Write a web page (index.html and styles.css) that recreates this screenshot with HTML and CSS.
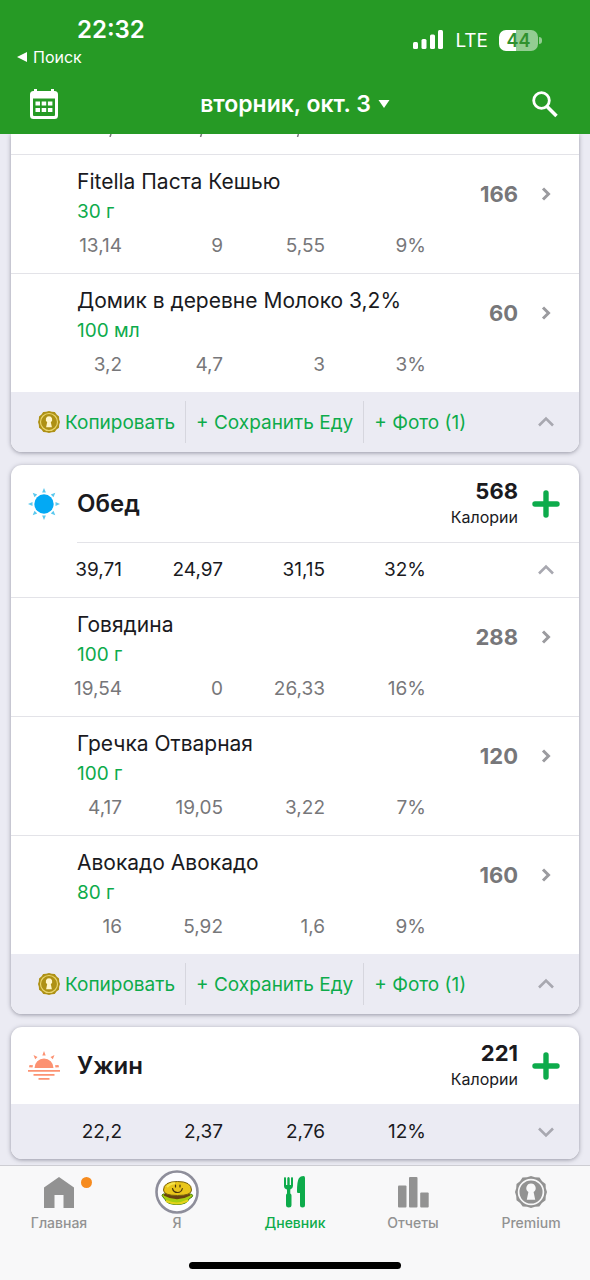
FILE: index.html
```html
<!DOCTYPE html>
<html lang="ru">
<head>
<meta charset="utf-8">
<meta name="viewport" content="width=device-width, initial-scale=1">
<title>Дневник</title>
<link rel="stylesheet" href="styles.css">
</head>
<body>
<svg class="sprite" aria-hidden="true">
  <symbol id="right" viewBox="0 0 10 14"><path d="M2 1.500 7.500 7 2 12.500" fill="none" stroke="currentColor" stroke-width="3"/></symbol>
  <symbol id="up" viewBox="0 0 18 12"><path d="m2 9.500 7-7 7 7" fill="none" stroke="currentColor" stroke-width="2.600"/></symbol>
  <symbol id="down" viewBox="0 0 18 12"><path d="m2 2.500 7 7 7-7" fill="none" stroke="currentColor" stroke-width="2.600"/></symbol>
  <symbol id="plus" viewBox="0 0 28 28"><path d="M14 3v22M3 14h22" fill="none" stroke="currentColor" stroke-width="5.400" stroke-linecap="round"/></symbol>
  <symbol id="coin" viewBox="0 0 32 32">
    <path fill="currentColor" d="M16 0l4 1.200 4.500.300 2.600 3.700L30.600 8l.2 4.300L32 16l-1.200 4-.3 4.300-3.600 2.600-2.600 3.600-4.300.3L16 32l-4-1.200-4.300-.3-2.600-3.600L1.500 24.300 1.200 20 0 16l1.200-3.700L1.500 8l3.500-2.800L7.500 1.500 12 1.200z"/>
    <circle cx="16" cy="16" r="12.400" fill="none" stroke="var(--ring)" stroke-width="1.700"/>
    <path fill="var(--hole)" d="M16 7.500a4.700 4.700 0 0 1 2.600 8.600l1.600 7.700h-8.400l1.600-7.700A4.700 4.700 0 0 1 16 7.500z"/>
  </symbol>
</svg>
<div class="app">
  <header class="top">
    <div class="status">
      <div class="status-left">
        <time class="clock">22:32</time>
        <a class="back" href="#"><svg width="10" height="10" viewBox="0 0 10 10"><path d="M0 5 10 0v10z" fill="currentColor"/></svg>Поиск</a>
      </div>
      <div class="status-right">
        <svg width="31" height="20" viewBox="0 0 31 20" fill="currentColor"><rect x="0" y="12" width="5" height="7" rx="1.500"/><rect x="8.500" y="9" width="5" height="10" rx="1.500"/><rect x="17" y="4.500" width="5" height="14.500" rx="1.500"/><rect x="25" y="0" width="5" height="19" rx="1.500"/></svg>
        <span class="network">LTE</span>
        <span class="battery">44</span>
      </div>
    </div>
    <div class="bar">
      <button class="icon-button" aria-label="Календарь"><svg width="28" height="31" viewBox="0 0 28 31"><path fill="currentColor" fill-rule="evenodd" d="M3.500 2H4V0h3v2h14V0h3v2h.5A3.500 3.500 0 0 1 28 5.500v21a3.500 3.500 0 0 1-3.500 3.500h-21A3.500 3.500 0 0 1 0 26.500v-21A3.500 3.500 0 0 1 3.500 2zM3 9.500V26q0 1 1 1h20q1 0 1-1V9.500z"/><path fill="currentColor" d="M5.500 12.500h4.500v4H5.500zm6.200 0h4.500v4h-4.500zm6.200 0h4.500v4h-4.500zM5.500 19h4.500v4H5.500zm6.200 0h4.500v4h-4.500zm6.200 0h4.500v4h-4.500z"/></svg></button>
      <button class="date">вторник, окт. 3<svg width="12" height="8" viewBox="0 0 12 8"><path d="M.5 0h11L6 8z" fill="currentColor"/></svg></button>
      <button class="icon-button" aria-label="Найти"><svg width="26" height="27" viewBox="0 0 26 27" fill="none" stroke="currentColor"><circle cx="9.500" cy="9.500" r="7.800" stroke-width="2.800"/><path d="m15 15.500 9.500 9.500" stroke-width="3.600"/></svg></button>
    </div>
  </header>

  <main class="diary">
    <section class="card card-cut">
      <svg class="ticks" width="190" height="3" viewBox="0 0 190 3" aria-hidden="true"><path d="m2 0-1 3M92.500 0l-1 3M189.500 0l-1 3" stroke="currentColor" stroke-width="1.500"/></svg>
      <ul class="foods">
        <li><a class="food" href="#"><span class="name">Fitella Паста Кешью</span><span class="kcal">166</span><svg class="go" width="10" height="14"><use href="#right"/></svg><span class="portion">30 г</span><span class="nutrients"><span>13,14</span><span>9</span><span>5,55</span><span>9%</span></span></a></li>
        <li><a class="food" href="#"><span class="name">Домик в деревне Молоко 3,2%</span><span class="kcal">60</span><svg class="go" width="10" height="14"><use href="#right"/></svg><span class="portion">100 мл</span><span class="nutrients"><span>3,2</span><span>4,7</span><span>3</span><span>3%</span></span></a></li>
      </ul>
      <footer class="actions">
        <button class="action"><svg class="coin" width="22" height="22"><use href="#coin"/></svg>Копировать</button>
        <button class="action">+ Сохранить Еду</button>
        <button class="action">+ Фото (1)</button>
        <button class="toggle" aria-label="Свернуть"><svg width="18" height="12"><use href="#up"/></svg></button>
      </footer>
    </section>

    <section class="card">
      <header class="meal">
        <svg class="meal-icon" width="32" height="32" viewBox="-16 -16 32 32" fill="#5cc9ee"><circle r="9.700" fill="#03a9f4"/><path id="ray" d="M-1.900-11.500h3.800L0-16z"/><use href="#ray" transform="rotate(45)"/><use href="#ray" transform="rotate(90)"/><use href="#ray" transform="rotate(135)"/><use href="#ray" transform="rotate(180)"/><use href="#ray" transform="rotate(225)"/><use href="#ray" transform="rotate(270)"/><use href="#ray" transform="rotate(315)"/></svg>
        <h2>Обед</h2>
        <p class="total"><strong>568</strong><span>Калории</span></p>
        <button class="add" aria-label="Добавить"><svg width="28" height="28"><use href="#plus"/></svg></button>
      </header>
      <div class="summary summary-open">
        <div class="nutrients"><span>39,71</span><span>24,97</span><span>31,15</span><span>32%</span></div>
        <button class="toggle" aria-label="Свернуть"><svg width="18" height="12"><use href="#up"/></svg></button>
      </div>
      <ul class="foods">
        <li><a class="food" href="#"><span class="name">Говядина</span><span class="kcal">288</span><svg class="go" width="10" height="14"><use href="#right"/></svg><span class="portion">100 г</span><span class="nutrients"><span>19,54</span><span>0</span><span>26,33</span><span>16%</span></span></a></li>
        <li><a class="food" href="#"><span class="name">Гречка Отварная</span><span class="kcal">120</span><svg class="go" width="10" height="14"><use href="#right"/></svg><span class="portion">100 г</span><span class="nutrients"><span>4,17</span><span>19,05</span><span>3,22</span><span>7%</span></span></a></li>
        <li><a class="food" href="#"><span class="name">Авокадо Авокадо</span><span class="kcal">160</span><svg class="go" width="10" height="14"><use href="#right"/></svg><span class="portion">80 г</span><span class="nutrients"><span>16</span><span>5,92</span><span>1,6</span><span>9%</span></span></a></li>
      </ul>
      <footer class="actions">
        <button class="action"><svg class="coin" width="22" height="22"><use href="#coin"/></svg>Копировать</button>
        <button class="action">+ Сохранить Еду</button>
        <button class="action">+ Фото (1)</button>
        <button class="toggle" aria-label="Свернуть"><svg width="18" height="12"><use href="#up"/></svg></button>
      </footer>
    </section>

    <section class="card">
      <header class="meal">
        <svg class="meal-icon" width="32" height="32" viewBox="0 0 32 32" fill="#fc9272"><path d="M6.500 18a9.500 9.500 0 0 1 19 0zM14.300 5.500h3.400L16 1zM5.500 5l4 2-2.300 2.300zM26.500 5l-4 2 2.300 2.300zM1.500 15l3.500.2-.5 2.300-3.500-.3zM30.500 15l-3.500.2.500 2.300 3.500-.3z"/><path d="M0 20.800h32M5.500 24.800h21M10.500 28.800h11" stroke="#fc9272" stroke-width="1.800"/></svg>
        <h2>Ужин</h2>
        <p class="total"><strong>221</strong><span>Калории</span></p>
        <button class="add" aria-label="Добавить"><svg width="28" height="28"><use href="#plus"/></svg></button>
      </header>
      <div class="summary summary-closed">
        <div class="nutrients"><span>22,2</span><span>2,37</span><span>2,76</span><span>12%</span></div>
        <button class="toggle" aria-label="Развернуть"><svg width="18" height="12"><use href="#down"/></svg></button>
      </div>
    </section>
  </main>

  <nav class="tabs">
    <div class="tab-row">
      <a class="tab" href="#"><span class="tab-icon"><svg width="30" height="31" viewBox="0 0 30 31"><path fill="currentColor" d="M15 0 30 10.500V31H19.500V18h-9v13H0V10.500z"/></svg><span class="dot"></span></span>Главная</a>
      <a class="tab" href="#"><span class="tab-icon"><svg width="44" height="44" viewBox="0 0 44 44"><circle cx="22" cy="22" r="20.500" fill="#fdfdff" stroke="#8e8e9b" stroke-width="2.600"/><path d="M8 27q-2-2 0-3h28q3 1 1 3l-3 2q-2 5.500-12 5.500T10 29.500z" fill="#a8ce10" stroke="#4c8210"/><path d="M9.500 24q12.500 7 25 0" fill="none" stroke="#6a4310" stroke-width="3.500"/><path d="M11 31q11 5 22-.5" fill="none" stroke="#e5d41b" stroke-width="2"/><path d="M8.500 20q0-8.500 14-8.500t14 8.500q0 5.500-14 5.500t-14-5.500z" fill="#e9c51a" stroke="#77600e"/><path d="M12 17q3-3.500 8-3.700" fill="none" stroke="#f7e449" stroke-width="2"/><path d="M17.500 18.500q1 4 5 4t4.800-4M20.500 15v2M25 15v2" fill="none" stroke="#4a350c" stroke-width="1.200" stroke-linecap="round"/></svg></span>Я</a>
      <a class="tab tab-active" href="#" aria-current="page"><span class="tab-icon"><svg width="22" height="32" viewBox="0 0 22 32" fill="currentColor"><path d="M0 2.500Q0 1 1 1t1 1.500V9h1.300V2.500Q3.300 1 4.500 1t1.200 1.500V9H7V2.500Q7 1 8 1t1 1.500V10q0 2.500-2.700 3.500v4q1.200.5 1.200 2V29q0 2.500-2.700 2.500T2 29v-9.500q0-1.500 1-2v-4Q0 12.500 0 10z"/><path d="M21 2v27q0 2.500-2.500 2.500T16 29V17h-2q-1 0-1-1.500Q13 5 15 2q1.500-2 4.500-2Q21 0 21 2z"/></svg></span>Дневник</a>
      <a class="tab" href="#"><span class="tab-icon"><svg width="31" height="31" viewBox="0 0 31 31" fill="currentColor"><rect y="8.500" width="8.500" height="22" rx="1"/><rect x="11" width="8.500" height="30.500" rx="1"/><rect x="22.200" y="15.500" width="8.500" height="15" rx="1"/></svg></span>Отчеты</a>
      <a class="tab" href="#"><span class="tab-icon"><svg class="seal" width="32" height="32"><use href="#coin"/></svg></span>Premium</a>
    </div>
    <div class="home-bar"></div>
  </nav>
</div>
</body>
</html>
```

FILE: styles.css
```css
:root {
  --green: #0dab4b;
  --header: #269a25;
  --page: #ebebf3;
  --ink: #1a1a1e;
  --grey: #77777a;
  --line: #e3e3e8;
}

* { box-sizing: border-box; }

body {
  margin: 0;
  background: var(--page);
  color: var(--ink);
  font-family: Inter, "Liberation Sans", sans-serif;
  font-size: 19px;
}

h2, p, ul { margin: 0; padding: 0; }
ul { list-style: none; }
a { color: inherit; text-decoration: none; }
svg { display: block; flex: none; }
button {
  display: flex;
  align-items: center;
  justify-content: center;
  padding: 0;
  border: 0;
  background: none;
  color: inherit;
  font: inherit;
  white-space: nowrap;
}
.sprite { position: absolute; width: 0; height: 0; }

.app {
  display: flex;
  flex-direction: column;
  height: 100vh;
}

/* Header */
.top {
  flex: none;
  padding: 14px 32px 2px 17px;
  background: var(--header);
  color: #fff;
}
.status { display: flex; justify-content: space-between; }
.status-left { display: flex; flex-direction: column; }
.clock {
  padding-left: 60px;
  font-size: 24px;
  font-weight: 600;
  line-height: 32px;
}
.back {
  display: flex;
  align-items: center;
  gap: 6px;
  font-size: 16px;
  line-height: 22px;
}
.status-right {
  display: flex;
  align-items: center;
  gap: 11px;
  height: 52px;
  padding-right: 20px;
}
.battery {
  position: relative;
  width: 39px;
  border-radius: 7px;
  background: linear-gradient(90deg, #fff 44%, #93cd92 44%);
  color: #30912f;
  font-size: 18px;
  font-weight: 600;
  line-height: 21px;
  text-align: center;
}
.battery::after {
  content: "";
  position: absolute;
  top: 7px;
  right: -4px;
  width: 3px;
  height: 7px;
  border-radius: 0 3px 3px 0;
  background: #93cd92;
}
.bar {
  display: grid;
  grid-template-columns: 41px 1fr 26px;
  align-items: center;
  height: 56px;
  margin-top: 8px;
}
.icon-button { height: 40px; }
.icon-button:first-child { justify-content: flex-end; }
.date {
  gap: 7px;
  font-size: 23px;
  font-weight: 600;
}

/* Meal cards */
.diary {
  display: flex;
  flex: 1;
  flex-direction: column;
  justify-content: flex-end;
  gap: 13px;
  min-height: 0;
  padding: 0 11px 6px;
  overflow: hidden;
}
.card {
  flex: none;
  overflow: hidden;
  border-radius: 11px;
  background: #fff;
  box-shadow: 0 1px 4px #80808ecc;
}
.card-cut { border-radius: 0 0 11px 11px; }
.ticks {
  margin: 0 0 17px 98px;
  color: var(--grey);
}
.nutrients {
  display: grid;
  grid-template-columns: 111fr 101fr 102fr 101fr 153fr;
  text-align: right;
}
.food {
  display: grid;
  grid-template-columns: 66px 1fr auto 61px;
  grid-template-rows: 30px 30px 38px;
  align-items: center;
  padding: 11px 0 9px;
  border-top: 1px solid var(--line);
}
.name { grid-column: 2; font-size: 21px; white-space: nowrap; }
.kcal {
  grid-area: 1 / 3 / 3 / 4;
  align-self: start;
  color: var(--grey);
  font-size: 22px;
  font-weight: 700;
  line-height: 56px;
}
.go {
  grid-area: 1 / 4 / 3 / 5;
  align-self: start;
  justify-self: center;
  margin: 21px 5px 0 0;
  color: #9b9b9f;
}
.portion { grid-area: 2 / 2; color: var(--green); }
.food .nutrients { grid-area: 3 / 1 / 4 / 5; color: var(--grey); }

.actions {
  display: grid;
  grid-template-columns: auto auto auto 1fr;
  align-items: center;
  height: 60px;
  padding-left: 27px;
  background: var(--page);
}
.action {
  gap: 5px;
  height: 42px;
  padding: 0 10px;
  border-left: 1px solid #d6d6de;
  color: var(--green);
}
.action:first-child { padding-left: 0; border-left: 0; }
.coin { color: #ae9115; --ring: #e9d56c; --hole: #fff6cc; }
.toggle {
  justify-self: end;
  width: 66px;
  height: 42px;
  color: #a8a8b0;
}

.meal {
  display: grid;
  grid-template-columns: 66px 1fr auto 61px;
  align-items: center;
  height: 77px;
}
.meal-icon { justify-self: center; }
.meal h2 { font-size: 24px; font-weight: 600; }
.total { display: grid; text-align: right; }
.total strong { font-size: 22px; font-weight: 700; line-height: 27px; }
.total span { font-size: 16px; line-height: 24px; }
.add { width: 55px; height: 55px; color: var(--green); }
.summary {
  display: grid;
  grid-template-columns: 1fr;
  align-items: center;
  height: 55px;
}
.summary > * { grid-row: 1; grid-column: 1; }
.summary-open {
  background: linear-gradient(var(--line), var(--line)) 66px 0 / 100% 1px no-repeat;
}
.summary-closed { background: var(--page); }

/* Tab bar */
.tabs {
  flex: none;
  padding: 4px 0 11px;
  border-top: 1px solid #cdcdd3;
  background: #f8f8f9;
}
.tab-row { display: grid; grid-template-columns: repeat(5, 1fr); }
.tab {
  display: flex;
  flex-direction: column;
  align-items: center;
  color: #929292;
  font-size: 14px;
  font-weight: 500;
  line-height: 18px;
}
.tab-icon {
  position: relative;
  display: flex;
  align-items: center;
  height: 44px;
}
.tab-active { color: var(--green); }
.dot {
  position: absolute;
  top: 7px;
  right: -18px;
  width: 11px;
  height: 11px;
  border-radius: 50%;
  background: #f68b1f;
}
.seal { --ring: #f8f8f9; --hole: #f8f8f9; }
.home-bar {
  width: 36%;
  height: 7px;
  margin: 30px auto 0;
  border-radius: 4px;
  background: #000;
}
```
